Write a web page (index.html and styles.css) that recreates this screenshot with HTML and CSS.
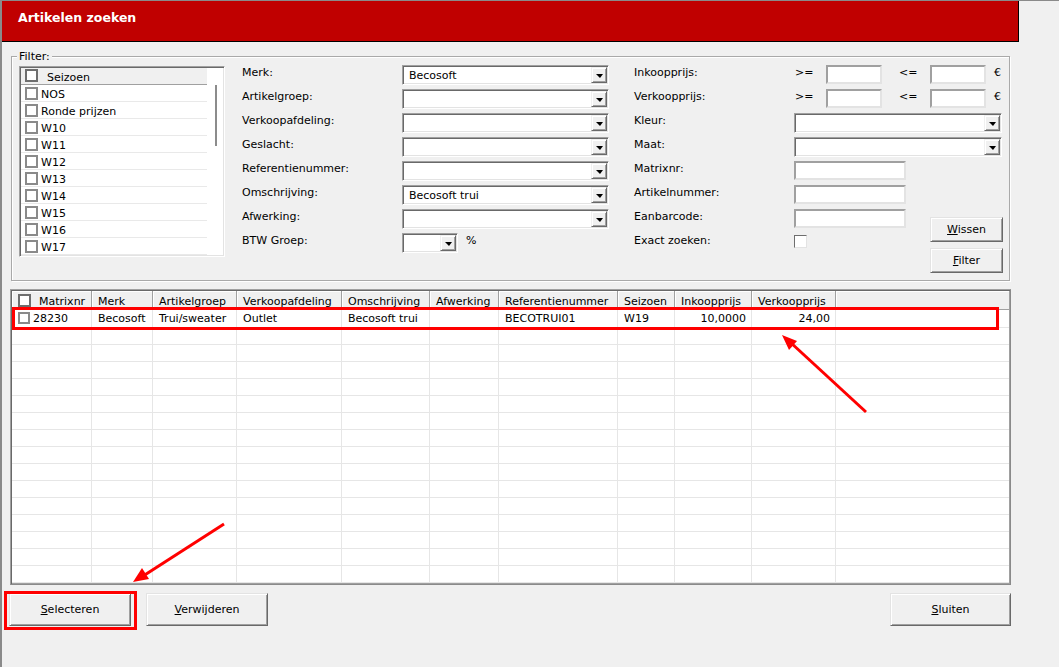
FILE: index.html
```html
<!DOCTYPE html>
<html lang="nl">

<head>
    <meta charset="UTF-8">
    <meta name="viewport" content="width=device-width, initial-scale=1.0">
    <title>Artikelen zoeken</title>
    <link rel="stylesheet" href="styles.css">
</head>

<body>
    <div class="page">
        <div class="window">
            <div class="titlebar">Artikelen zoeken</div>

            <!-- filter blok -->
            <div class="filter">
                <span class="legend">Filter:</span>

                <div class="season-list">
                    <div class="list-rows">
                        <div class="list-head"><span class="check check-dark"></span><span class="item-text">Seizoen</span></div>
                        <div class="list-item"><span class="check"></span><span class="item-text">NOS</span></div>
                        <div class="list-item"><span class="check"></span><span class="item-text">Ronde prijzen</span></div>
                        <div class="list-item"><span class="check"></span><span class="item-text">W10</span></div>
                        <div class="list-item"><span class="check"></span><span class="item-text">W11</span></div>
                        <div class="list-item"><span class="check"></span><span class="item-text">W12</span></div>
                        <div class="list-item"><span class="check"></span><span class="item-text">W13</span></div>
                        <div class="list-item"><span class="check"></span><span class="item-text">W14</span></div>
                        <div class="list-item"><span class="check"></span><span class="item-text">W15</span></div>
                        <div class="list-item"><span class="check"></span><span class="item-text">W16</span></div>
                        <div class="list-item"><span class="check"></span><span class="item-text">W17</span></div>
                    </div>
                    <div class="list-scroll"><div class="thumb"></div></div>
                </div>

                <div class="fields fields-main">
                    <div class="label">Merk:</div>
                    <div class="combo"><span class="combo-value">Becosoft</span><span class="combo-btn"></span></div>
                    <div class="label">Artikelgroep:</div>
                    <div class="combo"><span class="combo-value"></span><span class="combo-btn"></span></div>
                    <div class="label">Verkoopafdeling:</div>
                    <div class="combo"><span class="combo-value"></span><span class="combo-btn"></span></div>
                    <div class="label">Geslacht:</div>
                    <div class="combo"><span class="combo-value"></span><span class="combo-btn"></span></div>
                    <div class="label">Referentienummer:</div>
                    <div class="combo"><span class="combo-value"></span><span class="combo-btn"></span></div>
                    <div class="label">Omschrijving:</div>
                    <div class="combo"><span class="combo-value">Becosoft trui</span><span class="combo-btn"></span></div>
                    <div class="label">Afwerking:</div>
                    <div class="combo"><span class="combo-value"></span><span class="combo-btn"></span></div>
                    <div class="label">BTW Groep:</div>
                    <div class="btw">
                        <div class="combo combo-small"><span class="combo-value"></span><span class="combo-btn"></span></div>
                        <span class="unit">%</span>
                    </div>
                </div>

                <div class="fields fields-side">
                    <div class="label">Inkoopprijs:</div>
                    <div class="range">
                        <span class="op">&gt;=</span><span class="text text-price"></span>
                        <span class="op op-le">&lt;=</span><span class="text text-price"></span>
                        <span class="euro">€</span>
                    </div>
                    <div class="label">Verkoopprijs:</div>
                    <div class="range">
                        <span class="op">&gt;=</span><span class="text text-price"></span>
                        <span class="op op-le">&lt;=</span><span class="text text-price"></span>
                        <span class="euro">€</span>
                    </div>
                    <div class="label">Kleur:</div>
                    <div class="combo wide"><span class="combo-value"></span><span class="combo-btn"></span></div>
                    <div class="label">Maat:</div>
                    <div class="combo wide"><span class="combo-value"></span><span class="combo-btn"></span></div>
                    <div class="label">Matrixnr:</div>
                    <div class="text text-mid"></div>
                    <div class="label">Artikelnummer:</div>
                    <div class="text text-mid"></div>
                    <div class="label">Eanbarcode:</div>
                    <div class="text text-mid"></div>
                    <div class="label">Exact zoeken:</div>
                    <div class="exact"></div>
                    <div class="filter-buttons">
                        <button class="btn btn-sm"><u>W</u>issen</button>
                        <button class="btn btn-sm"><u>F</u>ilter</button>
                    </div>
                </div>
            </div>

            <!-- resultaten -->
            <div class="results">
                <table class="grid" id="grid">
                    <colgroup>
                        <col class="w-matrix">
                        <col class="w-merk">
                        <col class="w-groep">
                        <col class="w-afd">
                        <col class="w-oms">
                        <col class="w-afw">
                        <col class="w-ref">
                        <col class="w-seiz">
                        <col class="w-ink">
                        <col class="w-verk">
                        <col>
                    </colgroup>
                    <thead>
                        <tr>
                            <th><span class="check check-dark"></span>Matrixnr</th>
                            <th>Merk</th>
                            <th>Artikelgroep</th>
                            <th>Verkoopafdeling</th>
                            <th>Omschrijving</th>
                            <th>Afwerking</th>
                            <th>Referentienummer</th>
                            <th>Seizoen</th>
                            <th>Inkoopprijs</th>
                            <th>Verkoopprijs</th>
                            <th></th>
                        </tr>
                    </thead>
                    <tbody id="grid-body">
                        <tr>
                            <td class="first"><span class="check check-row"></span>28230</td>
                            <td>Becosoft</td>
                            <td>Trui/sweater</td>
                            <td>Outlet</td>
                            <td>Becosoft trui</td>
                            <td></td>
                            <td>BECOTRUI01</td>
                            <td>W19</td>
                            <td class="num">10,0000</td>
                            <td class="num">24,00</td>
                            <td></td>
                        </tr>
                    </tbody>
                </table>
            </div>

            <div class="actions">
                <button class="btn btn-lg"><u>S</u>electeren</button>
                <button class="btn btn-lg"><u>V</u>erwijderen</button>
                <button class="btn btn-lg btn-close"><u>S</u>luiten</button>
            </div>
        </div>

        <!-- rode markeringen -->
        <div class="mark mark-row"></div>
        <div class="mark mark-btn"></div>
        <svg class="arrows" width="1059" height="667" viewBox="0 0 1059 667">
            <line x1="866" y1="412" x2="790" y2="342" stroke="#f00" stroke-width="3"/>
            <polygon points="782,335 797,341 789,350" fill="#f00"/>
            <line x1="224" y1="524" x2="140" y2="578" stroke="#f00" stroke-width="3"/>
            <polygon points="133,582 149,579 142,568" fill="#f00"/>
        </svg>
    </div>

    <script>
        // lege rijen in het raster
        var oBody = document.getElementById('grid-body');
        for (var row = 0; row < 15; row++) {
            var oTr = document.createElement('tr');
            for (var col = 0; col < 11; col++) {
                oTr.appendChild(document.createElement('td'));
            }
            oBody.appendChild(oTr);
        }
    </script>
</body>

</html>
```

FILE: styles.css
```css
* {
    margin: 0;
    padding: 0;
    box-sizing: border-box;
}

body {
    background: #f0f0f0;
    font-family: "DejaVu Sans", Verdana, sans-serif;
    font-size: 11px;
    color: #000;
}

.page {
    position: relative;
    width: 1059px;
    height: 667px;
    border-top: 1px solid #8a8a8a;
    overflow: hidden;
}

.window {
    width: 1019px;
    height: 666px;
    border-left: 2px solid #8a8a8a;
}

.titlebar {
    height: 41px;
    background: #c00000;
    border-right: 1px solid #000;
    border-bottom: 1px solid #000;
    color: #fff;
    font-weight: bold;
    font-size: 12.5px;
    line-height: 15px;
    padding: 9px 0 0 16px;
}

/* filter */
.filter {
    position: relative;
    margin: 14px 0 0 9px;
    width: 999px;
    height: 225px;
    border: 1px solid #a9a9a9;
    box-shadow: inset 1px 1px 0 #fff, 1px 1px 0 #fff;
    display: flex;
    align-items: flex-start;
    padding: 8px 0 0 7px;
}

.legend {
    position: absolute;
    top: -7px;
    left: 5px;
    padding: 0 2px;
    line-height: 14px;
    background: #f0f0f0;
}

.check {
    display: inline-block;
    width: 13px;
    height: 13px;
    border: 2px solid #8a8a8a;
    background: #fff;
    flex: none;
}

.check-dark {
    border-color: #6e6e6e;
}

.season-list {
    width: 206px;
    height: 191px;
    margin-top: 1px;
    border: 1px solid;
    border-color: #a0a0a0 #fff #fff #a0a0a0;
    padding: 1px;
    box-shadow: inset 1px 1px 0 #696969, inset -1px -1px 0 #e3e3e3;
    background: #fff;
    display: flex;
}

.list-rows {
    width: 186px;
}

.list-head {
    height: 17px;
    background: #f0f0f0;
    border-bottom: 1px solid #a0a0a0;
    display: flex;
    align-items: flex-start;
    padding: 1px 0 0 4px;
}

.list-head .check {
    margin-right: 9px;
}

.list-head .item-text {
    margin-top: 2px;
}

.list-item {
    height: 17px;
    border-bottom: 1px solid #e9e9e9;
    display: flex;
    align-items: flex-start;
    padding: 2px 0 0 4px;
}

.list-item .check {
    margin-right: 3px;
}

.list-item .item-text {
    margin-top: 1px;
}

.item-text {
    line-height: 14px;
}

.list-scroll {
    width: 16px;
}

.thumb {
    margin: 17px 0 0 8px;
    width: 2px;
    height: 61px;
    background: #8c8c8c;
}

.fields {
    display: grid;
    grid-template-rows: repeat(8, 20px);
    row-gap: 4px;
}

.fields-main {
    margin-left: 17px;
    grid-template-columns: 160px 207px;
}

.fields-side {
    margin-left: 25px;
    grid-template-columns: 160px 136px 72px;
}

.label {
    grid-column: 1;
    line-height: 14px;
    padding-top: 1px;
    white-space: nowrap;
}

.combo {
    display: flex;
    height: 20px;
    border: 1px solid;
    border-color: #a0a0a0 #fff #fff #a0a0a0;
    padding: 1px;
    box-shadow: inset 1px 1px 0 #696969, inset -1px -1px 0 #e3e3e3;
    background: #fff;
}

.combo-value {
    flex: 1;
    padding: 1px 0 0 5px;
    line-height: 16px;
    white-space: nowrap;
}

.combo-btn {
    width: 16px;
    background: #f0f0f0;
    border: 1px solid;
    border-color: #f0f0f0 #696969 #696969 #f0f0f0;
    box-shadow: inset 1px 1px 0 #fff, inset -1px -1px 0 #a0a0a0;
    display: flex;
    align-items: center;
    justify-content: center;
}

.combo-btn::after {
    content: "";
    border-left: 4px solid transparent;
    border-right: 3px solid transparent;
    border-top: 4px solid #000;
    margin-top: 1px;
}

.wide {
    grid-column: 2 / 4;
}

.btw {
    display: flex;
    align-items: flex-start;
}

.combo-small {
    width: 56px;
}

.unit {
    margin-left: 8px;
    line-height: 14px;
    padding-top: 1px;
}

.text {
    display: block;
    height: 19px;
    border: 2px solid;
    border-color: #a0a0a0 #e3e3e3 #e3e3e3 #a0a0a0;
    background: #fff;
}

.text-price {
    width: 56px;
}

.text-mid {
    grid-column: 2;
    width: 112px;
}

.range {
    grid-column: 2 / 4;
    display: flex;
    align-items: flex-start;
}

.op {
    width: 32px;
    padding: 1px 0 0 1px;
    line-height: 14px;
}

.op-le {
    width: 31px;
    margin-left: 17px;
    padding-left: 0;
}

.euro {
    margin-left: 8px;
    padding-top: 1px;
    line-height: 14px;
}

.exact {
    grid-column: 2;
    width: 13px;
    height: 13px;
    margin-top: 2px;
    border: 1px solid;
    border-color: #6e6e6e #e3e3e3 #e3e3e3 #6e6e6e;
    background: #fff;
}

.filter-buttons {
    grid-column: 3;
    grid-row: 7 / 9;
    display: flex;
    flex-direction: column;
    gap: 6px;
    padding-top: 8px;
}

/* knoppen */
.btn {
    background: #f0f0f0;
    border: 1px solid;
    border-color: #e3e3e3 #696969 #696969 #e3e3e3;
    box-shadow: inset 1px 1px 0 #fff, inset -1px -1px 0 #a0a0a0;
    font: inherit;
    color: #000;
    padding: 0;
    text-align: center;
    flex: none;
}

.btn-sm {
    width: 73px;
    height: 25px;
}

.btn-lg {
    width: 122px;
    height: 33px;
}

.btn-close {
    margin-left: auto;
    width: 121px;
}

/* resultaten */
.results {
    margin: 8px 0 0 8px;
    width: 1001px;
    height: 296px;
    border: 1px solid;
    border-color: #a0a0a0 #8a8a8a #8a8a8a #a0a0a0;
    padding: 1px;
    background: #fff;
    box-shadow: inset 1px 1px 0 #696969, inset -1px -1px 0 #a0a0a0;
}

.grid {
    width: 997px;
    table-layout: fixed;
    border-collapse: separate;
    border-spacing: 0;
}

.w-matrix { width: 80px; }
.w-merk { width: 61px; }
.w-groep { width: 84px; }
.w-afd { width: 105px; }
.w-oms { width: 88px; }
.w-afw { width: 69px; }
.w-ref { width: 119px; }
.w-seiz { width: 57px; }
.w-ink { width: 77px; }
.w-verk { width: 84px; }

.grid th {
    height: 19px;
    background: #f0f0f0;
    border-right: 1px solid #a0a0a0;
    border-bottom: 1px solid #a0a0a0;
    box-shadow: inset 1px 1px 0 #fff;
    font-weight: normal;
    text-align: left;
    padding: 3px 0 0 6px;
    line-height: 15px;
    white-space: nowrap;
    overflow: hidden;
    vertical-align: top;
}

.grid th:last-child {
    border-right: 0;
}

.grid th .check {
    width: 13px;
    height: 13px;
    margin-right: 8px;
    vertical-align: -2px;
}

.grid td {
    height: 17px;
    border-right: 1px solid #e6e6e6;
    border-bottom: 1px solid #e6e6e6;
    padding: 1px 5px 0 6px;
    line-height: 16px;
    white-space: nowrap;
    overflow: hidden;
}

.grid td:last-child {
    border-right: 0;
}

.grid td.num {
    text-align: right;
}

.check-row {
    width: 12px;
    height: 12px;
    margin-right: 3px;
    vertical-align: -2px;
}

.actions {
    display: flex;
    gap: 15px;
    margin-top: 8px;
    padding: 0 8px 0 7px;
}

/* rode markeringen over het scherm */
.mark {
    position: absolute;
    border: 3px solid #f00;
}

.mark-row {
    left: 12px;
    top: 306px;
    width: 987px;
    height: 23px;
}

.mark-btn {
    left: 4px;
    top: 590px;
    width: 133px;
    height: 39px;
}

.arrows {
    position: absolute;
    left: 0;
    top: -1px;
    pointer-events: none;
}
```
